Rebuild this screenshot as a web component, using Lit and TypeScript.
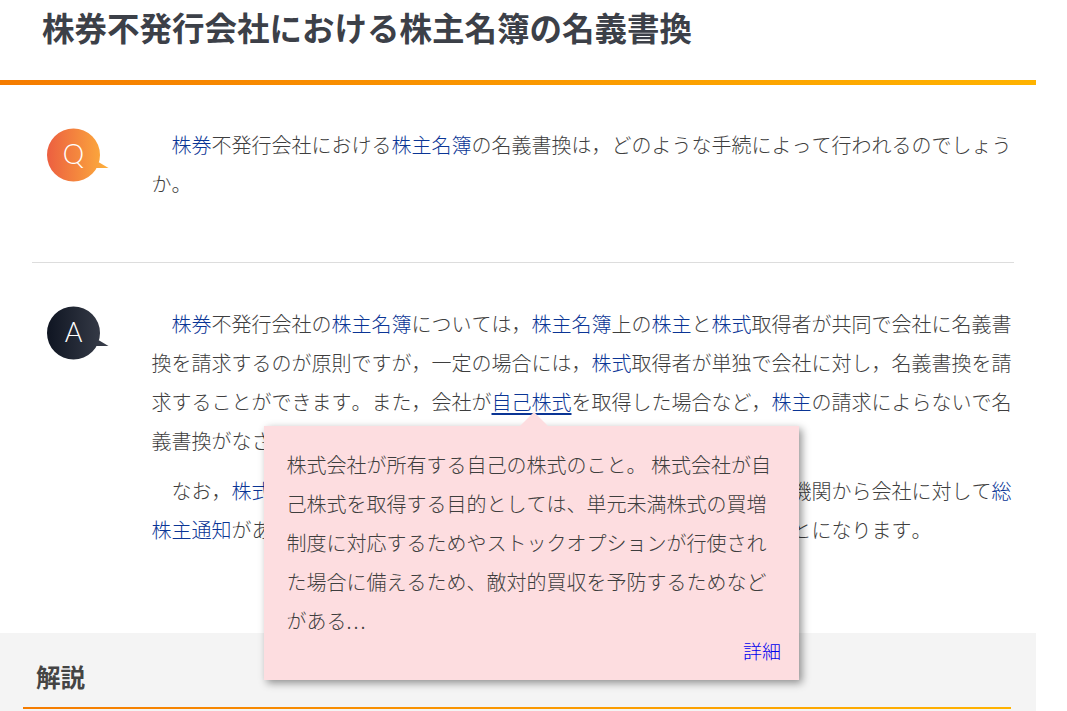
import { LitElement, html, css } from "lit";
import { customElement } from "lit/decorators.js";

const bubble = (id: string, from: string, to: string, letter: string) => html`
  <svg class="bubble" width="62" height="54" viewBox="0 0 62 54" aria-hidden="true">
    <defs>
      <linearGradient id=${id} x1="0" y1="0" x2="1" y2="0">
        <stop offset="0" stop-color=${from}></stop>
        <stop offset="1" stop-color=${to}></stop>
      </linearGradient>
    </defs>
    <path d="M26.5 0.5a26.5 26.5 0 1 1 0 53a26.5 26.5 0 0 1 0 -53z M48 32 L61.5 40 L44 40 Z" fill=${`url(#${id})`}></path>
    <text x="26.5" y="36" text-anchor="middle" class="letter">${letter}</text>
  </svg>`;

@customElement("app-root")
export class AppRoot extends LitElement {
  static styles = css`
    :host {
      display: block;
      width: 1067px;
      height: 711px;
      overflow: hidden;
      background: #fff;
      font-family: "Noto Sans CJK JP", "Noto Sans", sans-serif;
      font-kerning: none;
      text-spacing-trim: space-all;
      color: #3e3e3e;
    }
    .page { width: 1036px; position: relative; }
    h1 {
      margin: 0;
      height: 80px;
      box-sizing: border-box;
      padding: 5px 0 0 42px;
      font-size: 32.5px;
      line-height: 44px;
      font-weight: 700;
      color: #3c4048;
      white-space: nowrap;
    }
    .rule {
      height: 5px;
      background: linear-gradient(90deg, #f57c00, #ffb300);
    }
    .qa {
      display: flex;
      margin: 0 22px 0 32px;
    }
    .q { padding: 40px 0 59px; border-bottom: 1px solid #ddd; }
    .a { padding: 41px 0 84px; }
    .icon { flex: 0 0 119.5px; padding-left: 15px; box-sizing: border-box; }
    .bubble { display: block; margin-top: 3px; }
    .a .bubble { margin-top: 2px; }
    .letter {
      font-family: "Lato", "Noto Sans", sans-serif;
      font-size: 27px;
      font-weight: 300;
      fill: #fff;
    }
    .text { width: 861px; }
    p {
      margin: 0 0 11px;
      font-size: 20px;
      line-height: 39px;
      font-weight: 300;
      text-indent: 20px;
      color: #3e3e3e;
    }
    p:last-child { margin-bottom: 0; }
    .k { color: #0a3595; }
    .u {
      color: #0a3595;
      text-decoration: underline;
      text-decoration-thickness: 2px;
      text-underline-offset: 3px;
    }
    .expl {
      background: #f4f4f4;
      padding: 22px 25px 0 23px;
      height: 78px;
      box-sizing: border-box;
    }
    h2 {
      margin: 0;
      padding: 0 0 10px 13px;
      height: 54px;
      box-sizing: border-box;
      font-size: 24.5px;
      line-height: 44px;
      font-weight: 700;
      color: #444;
      border-bottom: 2px solid;
      border-image: linear-gradient(90deg, #f57c00, #ffb300) 1;
    }
    .tip {
      position: absolute;
      left: 264px;
      top: 426px;
      width: 535px;
      height: 254px;
      box-sizing: border-box;
      padding: 20.4px 23px 0 22.5px;
      background: #fddde0;
      box-shadow: 3px 3px 8px rgba(0, 0, 0, 0.42);
      font-size: 20px;
      line-height: 38.8px;
      font-weight: 300;
      color: #3e3e3e;
    }
    .tip::before {
      content: "";
      position: absolute;
      left: 256px;
      top: -14px;
      width: 0;
      height: 0;
      border-left: 14px solid transparent;
      border-right: 14px solid transparent;
      border-bottom: 14px solid #fddde0;
    }
    .dots { letter-spacing: 2px; }
    .more {
      position: absolute;
      right: 18px;
      bottom: 15px;
      font-size: 19px;
      line-height: 28px;
      color: #0000ee;
    }
  `;

  render() {
    return html`
      <div class="page">
        <h1>株券不発行会社における株主名簿の名義書換</h1>
        <div class="rule"></div>
        <section class="qa q">
          <div class="icon">${bubble("gq", "#ec5f40", "#fdb03c", "Q")}</div>
          <div class="text">
            <p><span class="k">株券</span>不発行会社における<span class="k">株主名簿</span>の名義書換は，どのような手続によって行われるのでしょうか。</p>
          </div>
        </section>
        <section class="qa a">
          <div class="icon">${bubble("ga", "#0f1522", "#3a3f4b", "A")}</div>
          <div class="text">
            <p><span class="k">株券</span>不発行会社の<span class="k">株主名簿</span>については，<span class="k">株主名簿</span>上の<span class="k">株主</span>と<span class="k">株式</span>取得者が共同で会社に名義書換を請求するのが原則ですが，一定の場合には，<span class="k">株式</span>取得者が単独で会社に対し，名義書換を請求することができます。また，会社が<span class="u">自己株式</span>を取得した場合など，<span class="k">株主</span>の請求によらないで名義書換がなされます。</p>
            <p>なお，<span class="k">株式</span>が振替株式である場合には，名義の書換は行われず，振替機関から会社に対して<span class="k">総株主通知</span>があると，その旨が株主名簿に記載されたものとみなされることになります。</p>
          </div>
        </section>
        <section class="expl"><h2>解説</h2></section>
        <div class="tip">株式会社が所有する自己の株式のこと。 株式会社が自己株式を取得する目的としては、単元未満株式の買増制度に対応するためやストックオプションが行使された場合に備えるため、敵対的買収を予防するためなどがある<span class="dots">...</span><span class="more">詳細</span></div>
      </div>
    `;
  }
}
